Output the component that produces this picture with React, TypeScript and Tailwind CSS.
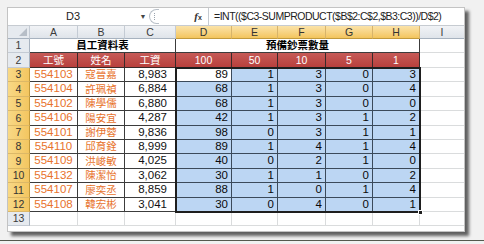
import React from "react";

const SANS = "font-['Liberation_Sans','Noto_Sans_CJK_TC',sans-serif]";
const CJK = "font-['Noto_Sans_CJK_TC','Noto_Sans_CJK_SC',sans-serif]";

const rows = [
  ["554103", "寇晉嘉", "8,983", 89, 1, 3, 0, 3],
  ["554104", "許珮禎", "6,884", 68, 1, 3, 0, 4],
  ["554102", "陳學儒", "6,880", 68, 1, 3, 0, 0],
  ["554106", "陽安宜", "4,287", 42, 1, 3, 1, 2],
  ["554101", "謝伊蓉", "9,836", 98, 0, 3, 1, 1],
  ["554110", "邱育銓", "8,999", 89, 1, 4, 1, 4],
  ["554109", "洪峻敏", "4,025", 40, 0, 2, 1, 0],
  ["554132", "陳潔怡", "3,062", 30, 1, 1, 0, 2],
  ["554107", "廖奕丞", "8,859", 88, 1, 0, 1, 4],
  ["554108", "韓宏彬", "3,041", 30, 0, 4, 0, 1],
] as const;

const colLetters = ["A", "B", "C", "D", "E", "F", "G", "H", "I"];
const heads = ["工號", "姓名", "工資", "100", "50", "10", "5", "1"];

function ColHead({ l }: { l: string }) {
  const sel = ["D", "E", "F", "G", "H"].includes(l);
  return (
    <div
      className={
        "flex items-center justify-center border-r border-b text-[10.5px] leading-none " +
        (sel
          ? "bg-gradient-to-b from-[#fbe3a8] to-[#f3c55c] border-r-[#d8b46a] border-b-[#c29a3c] text-[#333]"
          : "bg-gradient-to-b from-[#f1f3f6] to-[#dfe4ea] border-r-[#c4cbd4] border-b-[#a7b2bf] text-[#3b3b3b]")
      }
    >
      {l}
    </div>
  );
}

function RowHead({ n, sel }: { n: number; sel?: boolean }) {
  return (
    <div
      className={
        "flex items-center justify-center border-r border-b text-[10.5px] leading-none " +
        (sel
          ? "bg-gradient-to-r from-[#f8d885] to-[#f3c660] border-r-[#c29a3c] border-b-[#dcb867] text-[#333]"
          : "bg-[#e6eaef] border-r-[#a7b2bf] border-b-[#c4cbd4] text-[#3b3b3b]")
      }
    >
      {n}
    </div>
  );
}

function Light() {
  return <div className="border-r border-b border-[#dadcdd] bg-white" />;
}

export default function App() {
  return (
    <div className={"w-[484px] h-[244px] bg-[#f1f1f1] pt-[7px] pl-[7px] overflow-hidden " + SANS}>
      <div className="w-[458px] h-[225px] bg-white border border-[#c3c3c3] shadow-[4px_4px_3px_rgba(0,0,0,0.6)] flex flex-col overflow-hidden">
        {/* formula bar */}
        <div className="flex h-[18px] shrink-0 items-center border-b border-[#c6cbd1] text-[11px] text-[#222]">
          <div className="w-[130px] text-center leading-none">D3</div>
          <div className="w-[10px] text-center text-[7px] text-[#444] leading-none">▼</div>
          <div className="w-[1px]" />
          <div className="w-[10px] h-[15px] rounded-l-full border-l border-y border-[#b9c0c8] flex items-center justify-center">
            <div className="w-[2px] h-[7px] border-l border-dotted border-[#9aa3ad]" />
          </div>
          <div className="w-[33px]" />
          <div className="w-[12px] text-center leading-none text-[#333]">
            <span className="italic font-bold font-['Liberation_Serif',serif] text-[11px]">f</span>
            <span className="text-[7px] font-bold">x</span>
          </div>
          <div className="w-[4px]" />
          <div className="h-full border-l border-[#c6cbd1]" />
          <div className="pl-[5px] text-[10.5px] tracking-[-0.5px] leading-none whitespace-nowrap">
            =INT(($C3-SUMPRODUCT($B$2:C$2,$B3:C3))/D$2)
          </div>
        </div>

        {/* sheet grid */}
        <div className="grid grid-cols-[22px_48px_47px_51px_56px_46px_48px_47px_47px_45px] grid-rows-[13px_14px_15px_14px_15px_14px_15px_14px_14px_15px_14px_15px_14px_14px]">
          {/* header row */}
          <div className="relative border-r border-b border-r-[#c4cbd4] border-b-[#a7b2bf] bg-[#e6eaef]">
            <div className="absolute right-[2px] bottom-[2px] w-0 h-0 border-l-[8px] border-l-transparent border-b-[8px] border-b-[#b7bec7]" />
          </div>
          {colLetters.map((l) => (
            <ColHead key={l} l={l} />
          ))}

          {/* row 1 */}
          <RowHead n={1} />
          <div className={"col-span-3 flex items-center justify-center border-r border-b border-[#3c3c3c] text-[10.5px] leading-none font-bold text-black " + CJK}>
            員工資料表
          </div>
          <div className={"col-span-5 flex items-center justify-center border-r border-b border-[#3c3c3c] text-[10.5px] leading-none font-bold text-black " + CJK}>
            預備鈔票數量
          </div>
          <Light />

          {/* row 2 */}
          <RowHead n={2} />
          {heads.map((h) => (
            <div
              key={h}
              className={
                "flex items-center justify-center border-r border-b border-[#3a2a2a] bg-gradient-to-b from-[#c65a57] to-[#b8403d] text-white text-[10.5px] leading-none " +
                (/\d/.test(h) ? "" : CJK)
              }
            >
              {h}
            </div>
          ))}
          <Light />

          {/* selection block D3:H12 (explicitly placed; other cells flow around it) */}
          <div className="col-start-5 col-span-5 row-start-4 row-span-10 relative grid grid-cols-[56px_46px_48px_47px_47px] grid-rows-[14px_15px_14px_15px_14px_14px_15px_14px_15px_14px] outline-2 outline-[#1e1e1e] -outline-offset-1 z-10">
            {rows.map((r, i) =>
              [r[3], r[4], r[5], r[6], r[7]].map((v, j) => (
                <div
                  key={i + "-" + j}
                  className={
                    "flex items-center justify-end pr-[3px] border-r border-b border-[#3b4a5a] text-[11.5px] leading-none text-[#0a0a0a] " +
                    (i === 0 && j === 0 ? "bg-white" : "bg-[#bcd6f3]")
                  }
                >
                  {v}
                </div>
              ))
            )}
            <div className="absolute -right-[3px] -bottom-[3px] w-[5px] h-[5px] bg-[#1e1e1e] border border-white" />
          </div>

          {/* rows 3-12 */}
          {rows.map((r, i) => (
            <React.Fragment key={r[0]}>
              <RowHead n={i + 3} sel />
              <div className="flex items-center justify-center border-r border-b border-[#3c3c3c] text-[11.5px] leading-none text-[#e8732c]">
                {r[0]}
              </div>
              <div className={"flex items-center justify-center border-r border-b border-[#3c3c3c] text-[10.5px] leading-none text-[#e8732c] " + CJK}>
                {r[1]}
              </div>
              <div className="flex items-center justify-end pr-[8px] border-r border-b border-[#3c3c3c] text-[11.5px] leading-none text-[#111]">
                {r[2]}
              </div>
              <Light />
            </React.Fragment>
          ))}

          {/* row 13 */}
          <RowHead n={13} />
          {colLetters.map((l) => (
            <Light key={"r13" + l} />
          ))}
        </div>
      </div>
      <div className="mt-[8px] -ml-[7px] w-[484px] h-px bg-[#55594e]" />
    </div>
  );
}
